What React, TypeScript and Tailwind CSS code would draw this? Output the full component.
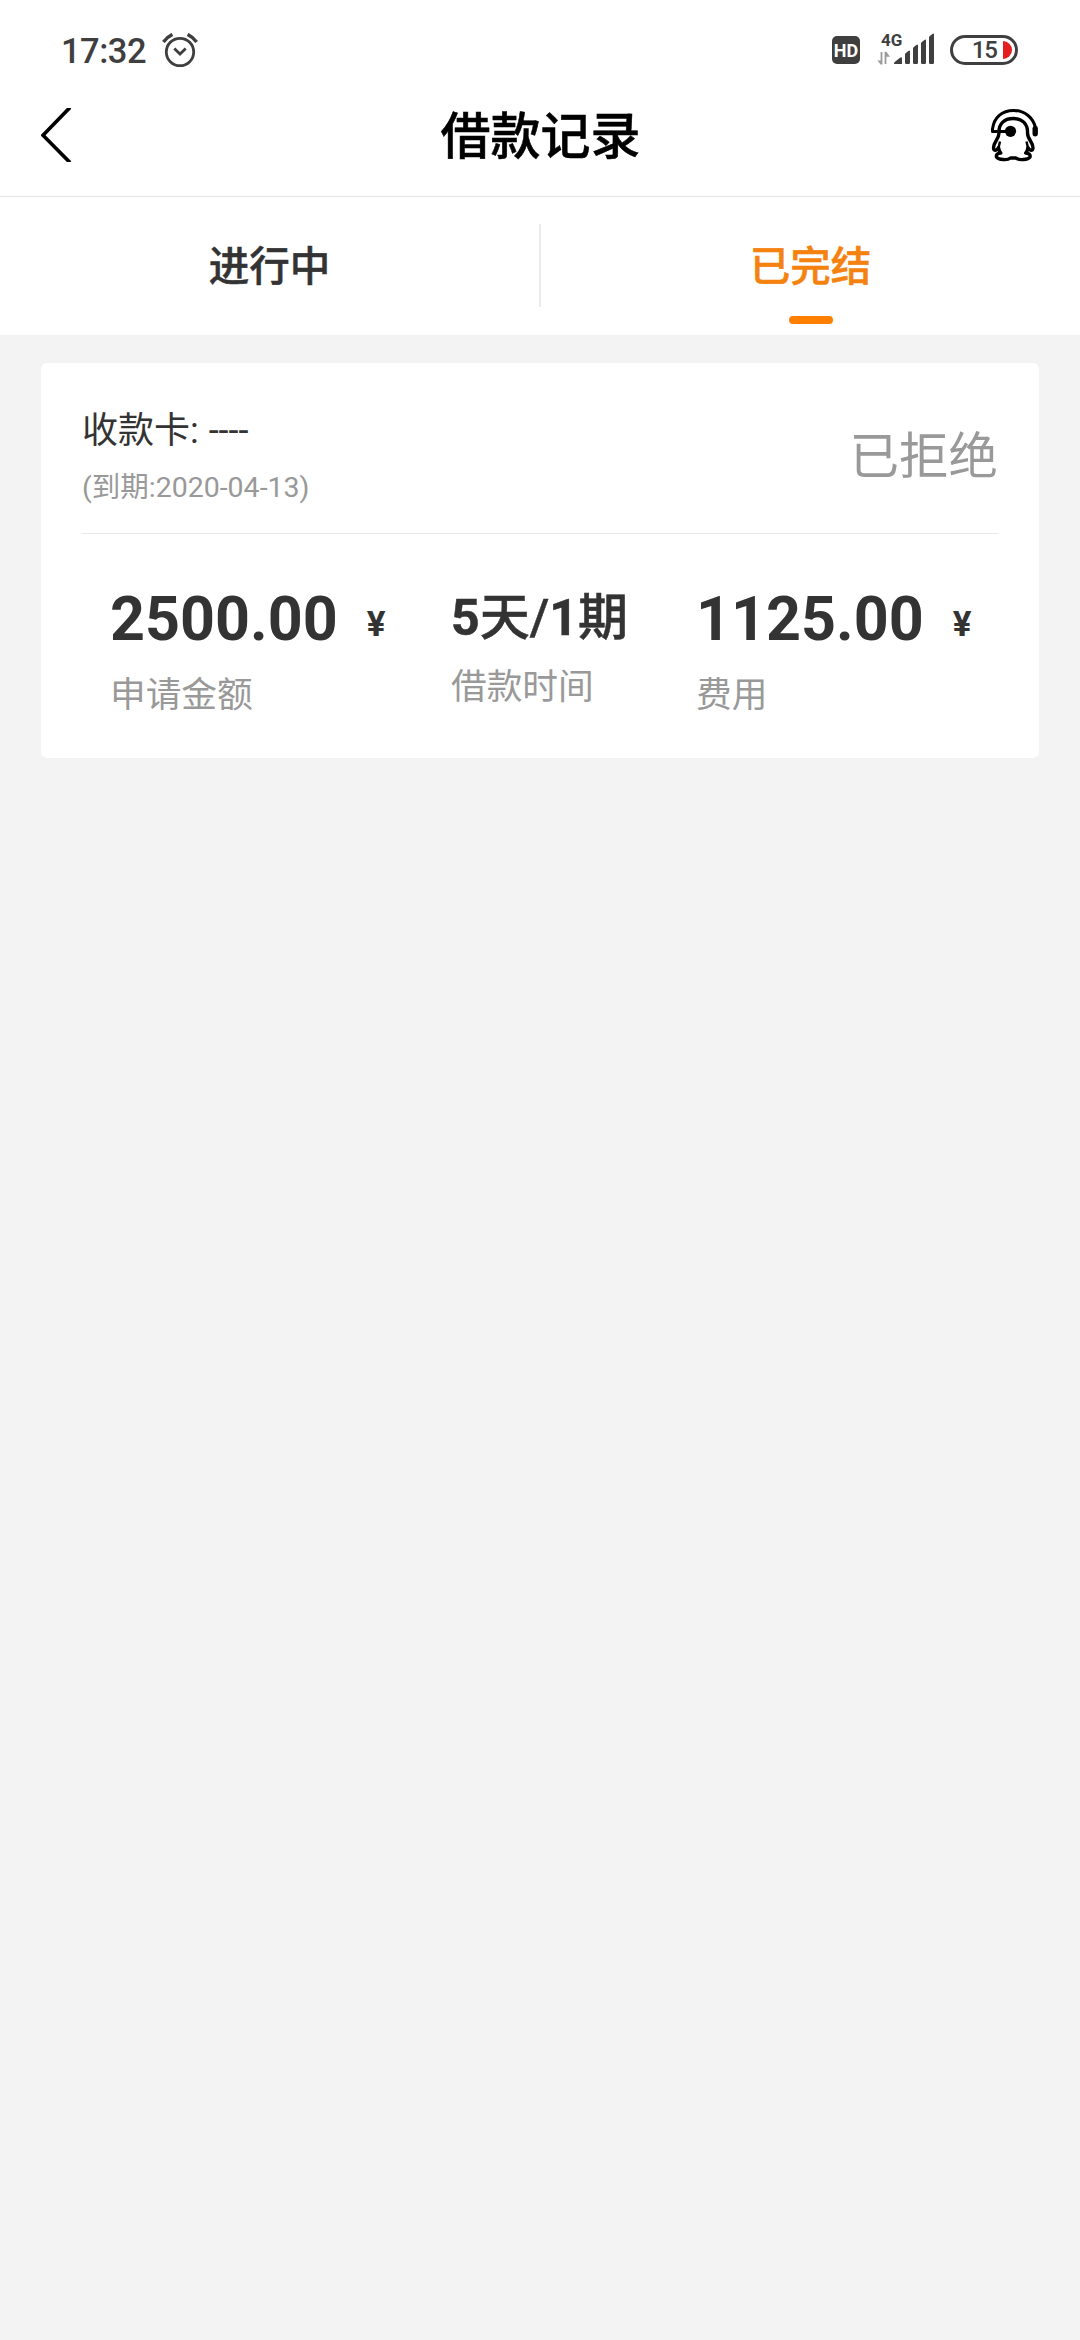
import type { ReactNode } from "react";

function AlarmIcon() {
  return (
    <svg width="36" height="36" viewBox="0 0 36 36" fill="none" stroke="#3f3f3f">
      <circle cx="18" cy="19" r="13.7" strokeWidth="2.8" />
      <path d="M12.3 15.6 18 21l5.700-5.400" strokeWidth="2.8" />
      <path d="M1.400 8.900Q5 4 10.400 1.400M34.600 8.900Q31 4 25.600 1.400" strokeWidth="3.4" />
    </svg>
  );
}

function SignalIcon() {
  return (
    <svg width="58" height="34" viewBox="0 0 58 34" fill="#3f3f3f">
      <g fill="#9b9b9b">
        <path d="M3.600 19h1.800v12.400H3.600L.4 27.400h3.200zM7.600 31V18.800h1.800l3.600 5H9.400V31z" />
      </g>
      <path d="M17 31q-.2-1.200 1-2.200l5-4q2-1.200 2 .6v5q0 .6-.8.6z" />
      <path d="M28 21.500q0-1 .8-1.600l2.600-2q1.600-.9 1.600.6v11.300q0 1.200-1.200 1.200h-2.600q-1.200 0-1.200-1.200z" />
      <path d="M36 15.500q0-1 .8-1.600l2.600-2q1.600-.9 1.600.6v17.300q0 1.200-1.200 1.200h-2.600q-1.200 0-1.200-1.200z" />
      <path d="M44 10.500q0-1 .8-1.600l2.600-2q1.600-.9 1.600.6v22.300q0 1.200-1.200 1.200h-2.600q-1.200 0-1.200-1.200z" />
      <path d="M52 4.500q0-1 .8-1.600l2.600-2q1.600-.9 1.600.6v28.300q0 1.200-1.200 1.200h-2.600q-1.200 0-1.200-1.200z" />
    </svg>
  );
}

function ServiceIcon() {
  return (
    <svg width="50" height="54" viewBox="0 0 50 54" fill="none" stroke="#000" strokeWidth="3" strokeLinejoin="round">
      {/* headset band and mic arm */}
      <path d="M20 23.500H2.500V21C4 9.500 12 2.500 23.500 2.500S43.500 10 45.500 20" />
      {/* penguin body */}
      <path d="M9 25C8.500 16 14 10.500 23.200 10.500S38 16 37.500 25c0 3.500 1 5 3 8 2.500 4 3.500 6.500 1.800 9-1.600.8-3.300-.8-4.300-2.500-.3 2.500-1 4-2.300 5.500 3 .3 5 1.500 4.300 4-2 3-11 3.500-14 1h-5.500c-3 2.500-12 2-14-1-.7-2.500 1.300-3.700 4.300-4-1.300-1.500-2-3-2.300-5.500-1 1.700-2.700 3.300-4.300 2.500-1.700-2.500-.7-5 1.800-9 2-3 3-4.500 3-8z" strokeWidth="3.400" />
      <path d="M10 33.500 8.500 40M36.500 33.500 38 40" strokeWidth="2.400" />
      <circle cx="20.500" cy="23.300" r="5.600" fill="#000" stroke="none" />
      <rect x="42.500" y="18" width="5.400" height="10.500" rx="2.400" fill="#000" stroke="none" />
    </svg>
  );
}

function StatusBar() {
  return (
    <div className="flex h-[90px] items-start justify-between pr-[62px] pl-[61px] text-[#3f3f3f]">
      <div className="flex pt-[33px]">
        <span className="w-[101px] text-[34.500px] leading-[36px] font-medium tracking-[-0.5px]">17:32</span>
        <AlarmIcon />
      </div>
      <div className="flex pt-[33px]">
        <span className="mt-[3px] flex h-7 w-7 items-center justify-center rounded-[5px] bg-[#3f3f3f] pt-[2px] text-[18px] leading-none font-bold text-white">
          HD
        </span>
        <div className="relative ml-[17px] h-8 w-[58px]">
          <span className="absolute top-0 left-[4px] text-[17px] leading-[14px] font-bold">4G</span>
          <SignalIcon />
        </div>
        <div className="mt-[2px] ml-[15px] flex h-[30px] w-[68px] items-center justify-end rounded-full border-[3px] border-[#3f3f3f] pr-[3px]">
          <span className="mr-[6px] text-[24px] leading-[24px] font-medium tracking-[-1px]">15</span>
          <span className="h-[18px] w-[9px] rounded-l-[2px] rounded-r-full bg-[#e41e1e]" />
        </div>
      </div>
    </div>
  );
}

function NavBar() {
  return (
    <header className="flex h-[107px] items-start justify-between border-b border-[#e6e6e6] pr-[40px] pl-[41px]">
      <svg className="mt-[18px]" width="50" height="54" viewBox="0 0 50 54" fill="none" stroke="#000" strokeWidth="3.600">
        <path d="M29 -.6 2 27.200 29 54.600" />
      </svg>
      <h1 className="mt-[17px] text-[50px] leading-[60px] font-medium text-black [-webkit-text-stroke:0.5px]">借款记录</h1>
      <div className="mt-[18px]">
        <ServiceIcon />
      </div>
    </header>
  );
}

function Tabs() {
  return (
    <nav className="flex h-[138px] items-start bg-white text-[40.500px] leading-[60px] font-medium [-webkit-text-stroke:0.5px]">
      <button className="flex h-full w-[539px] flex-col items-center pt-10">
        <span className="text-[#333]">进行中</span>
      </button>
      <span className="mt-[27px] h-[83px] w-[2px] bg-[#ebebeb]" />
      <button className="flex h-full w-[539px] flex-col items-center pt-10">
        <span className="text-[#f5820f]">已完结</span>
        <span className="mt-[19px] h-2 w-11 rounded-full bg-[#ff8000]" />
      </button>
    </nav>
  );
}

interface AmountProps {
  value: string;
  label: string;
}

function Amount({ value, label }: AmountProps) {
  return (
    <div>
      <p className="flex items-baseline text-[61px] leading-[72px] font-bold text-[#333]">
        {value}
        <span className="ml-[29px] text-[35px] leading-none">
          <span className="relative -top-1">¥</span>
        </span>
      </p>
      <Label>{label}</Label>
    </div>
  );
}

function Label({ children }: { children: ReactNode }) {
  return <p className="mt-[14px] text-[35.700px] leading-[52px] text-[#999]">{children}</p>;
}

function LoanCard() {
  return (
    <section className="mx-[41px] mt-7 h-[395px] rounded-[6px] bg-white px-[41px]">
      <div className="flex h-[171px] justify-between border-b border-[#e8e8e8]">
        <div className="pt-[42px]">
          <p className="text-[36px] leading-[52px] text-[#333] [word-spacing:1px]">收款卡: ----</p>
          <p className="mt-[10px] text-[28.500px] leading-[42px] text-[#999]">(到期:2020-04-13)</p>
        </div>
        <p className="pt-[58px] text-[49.500px] leading-[72px] text-[#999]">已拒绝</p>
      </div>
      <div className="flex pl-[28px]">
        <div className="w-[341px] pt-[49px]">
          <Amount value="2500.00" label="申请金额" />
        </div>
        <div className="w-[245px] pt-[52px]">
          <p className="h-[61px] text-[50px] leading-[64px] font-medium text-[#333] [-webkit-text-stroke:0.5px]">
            <b className="font-bold">5</b>天/<b className="font-bold">1</b>期
          </p>
          <Label>借款时间</Label>
        </div>
        <div className="pt-[49px]">
          <Amount value="1125.00" label="费用" />
        </div>
      </div>
    </section>
  );
}

export default function App() {
  return (
    <div className="h-[2340px] w-[1080px] overflow-hidden bg-[#f3f3f3] font-['Roboto','Noto_Sans_CJK_SC',sans-serif]">
      <div className="bg-white">
        <StatusBar />
        <NavBar />
      </div>
      <Tabs />
      <LoanCard />
    </div>
  );
}
